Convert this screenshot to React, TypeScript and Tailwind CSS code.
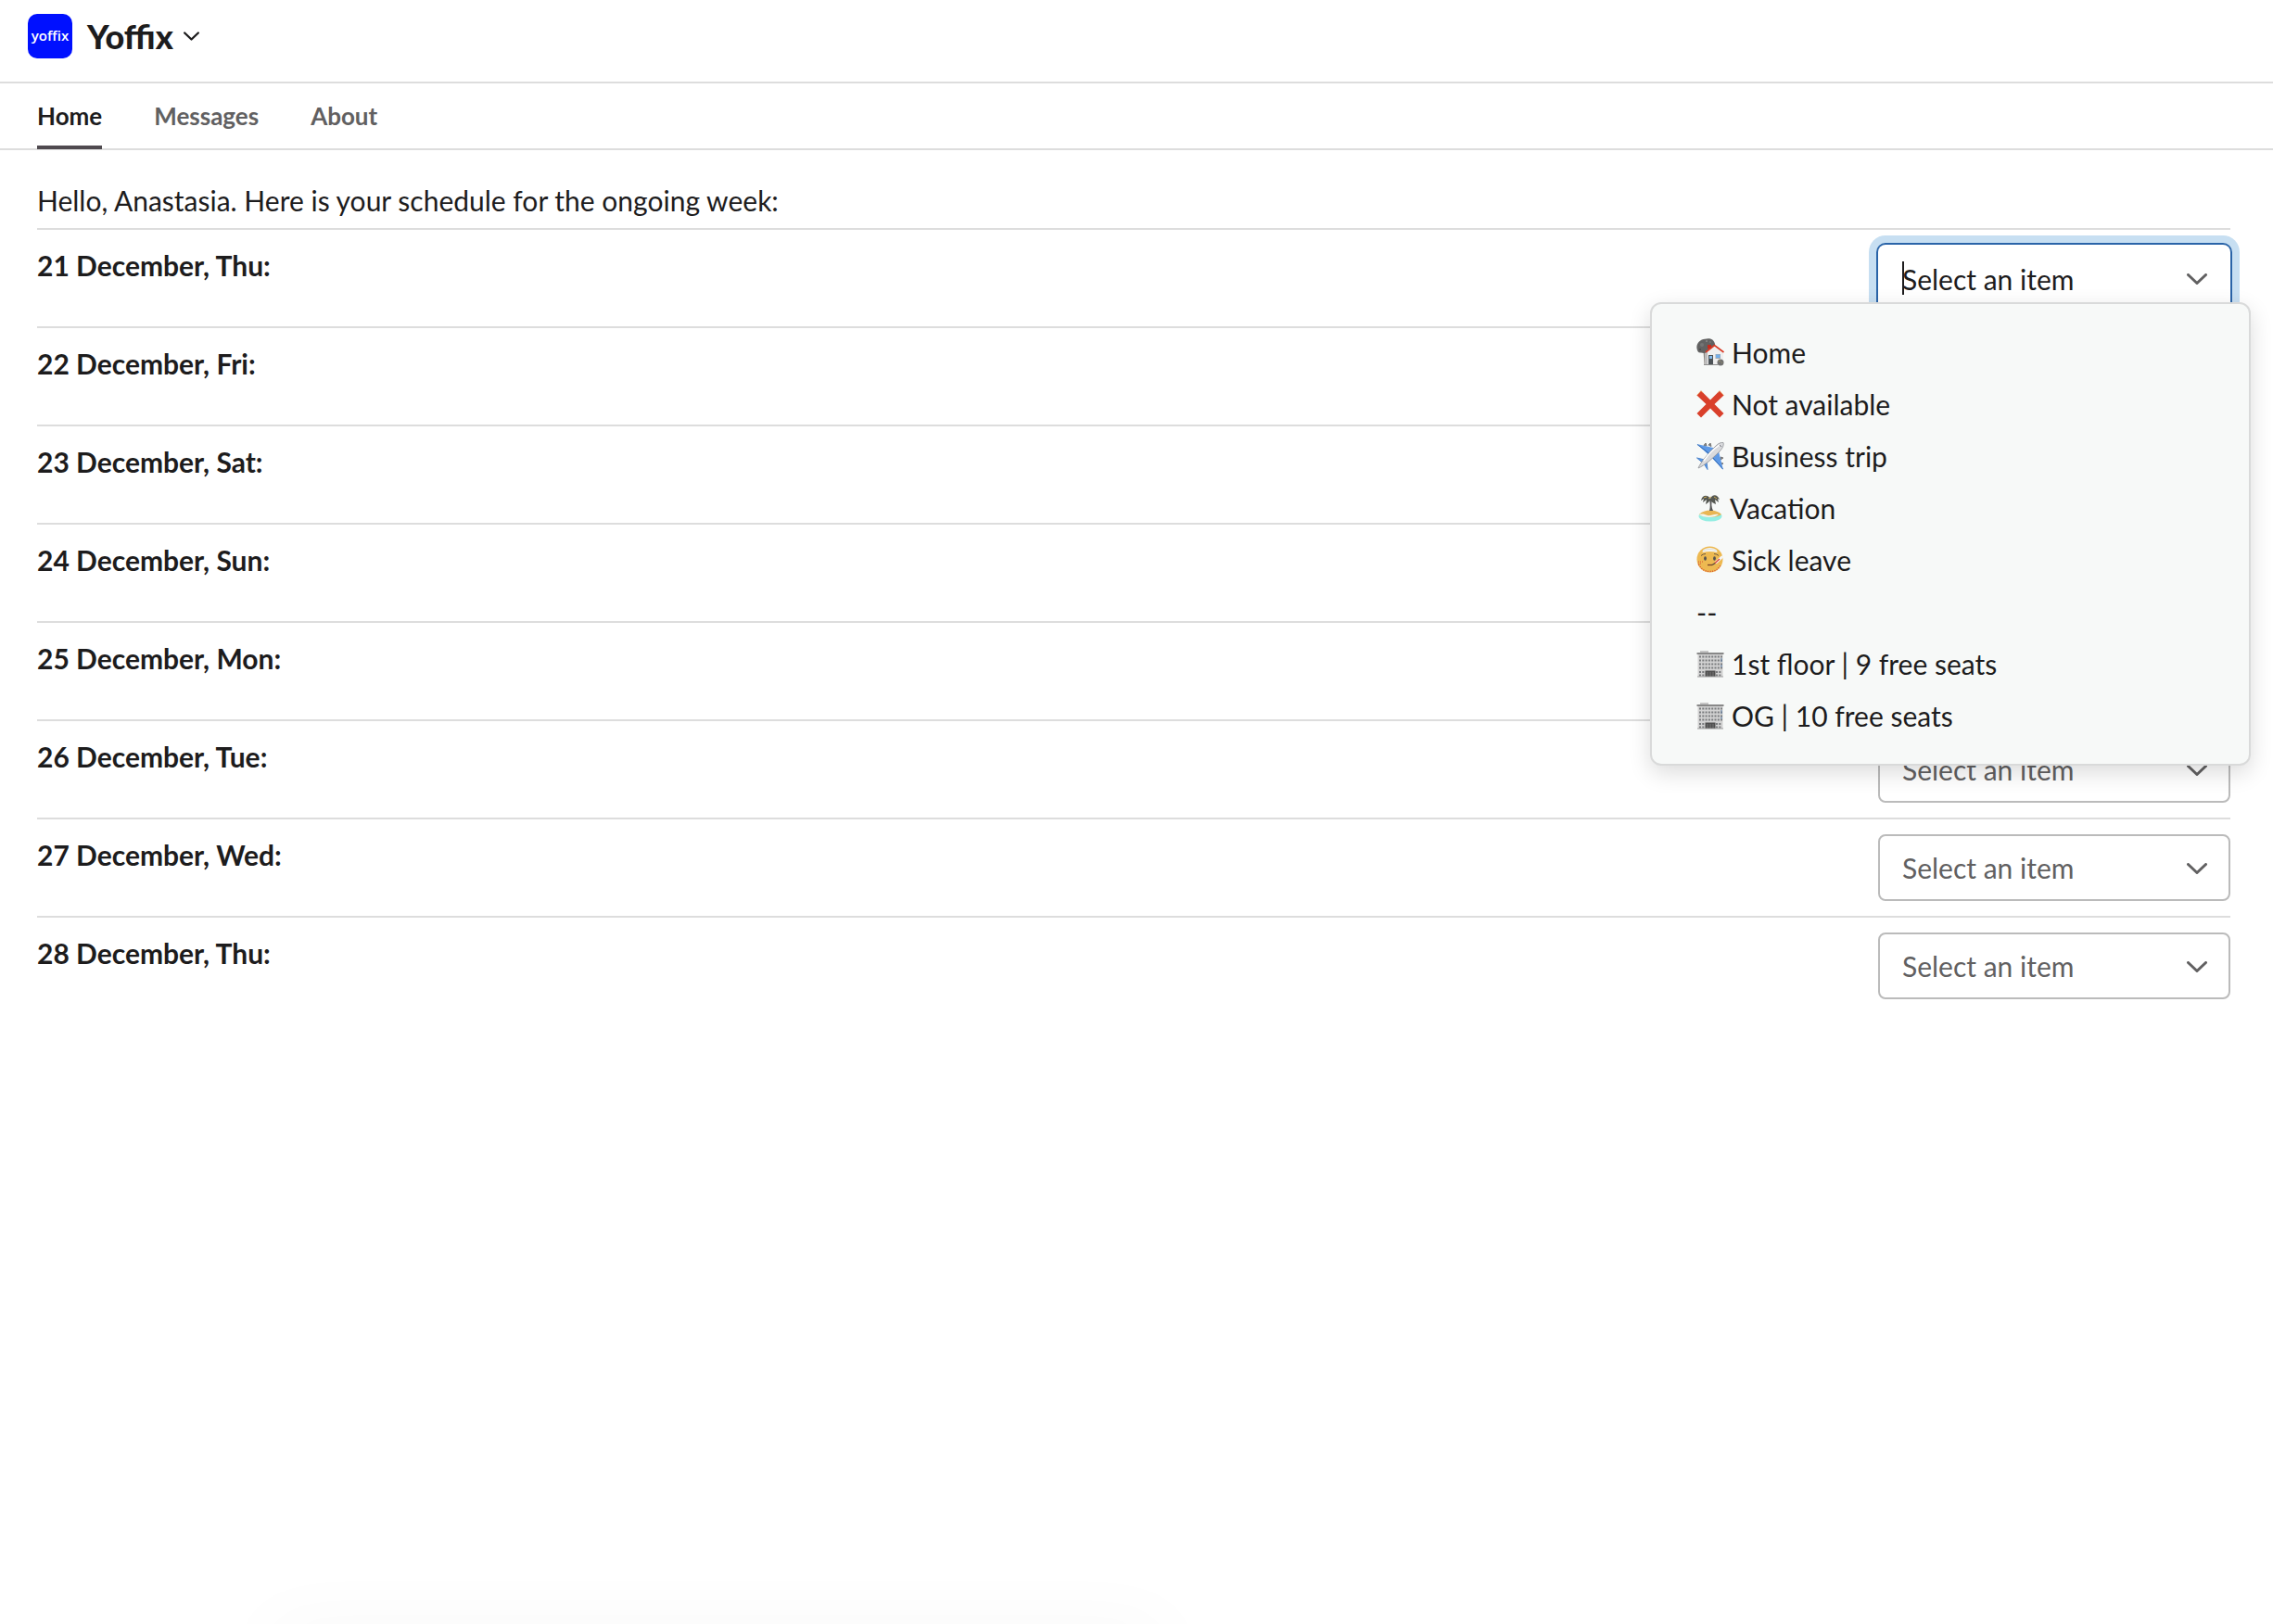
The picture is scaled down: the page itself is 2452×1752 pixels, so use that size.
import { useState } from "react";

const days = [
  "21 December, Thu:",
  "22 December, Fri:",
  "23 December, Sat:",
  "24 December, Sun:",
  "25 December, Mon:",
  "26 December, Tue:",
  "27 December, Wed:",
  "28 December, Thu:"
];

const tabs = ["Home", "Messages", "About"];

function ChevronIcon({ className }: { className: string }) {
  return (
    <svg viewBox="0 0 22 12" fill="none" stroke="currentColor" strokeLinecap="round" strokeLinejoin="round" className={className}>
      <path d="M1.5 1.5 11 10.5 20.5 1.5" strokeWidth="3" />
    </svg>
  );
}

function HouseIcon() {
  return (
    <svg viewBox="0 0 30 30" className="size-[30px] shrink-0">
      <path d="M7.5 13h3l1 15H8.500z" fill="#8b8580" />
      <path d="M.5 11C-.5 6 4 1 9 .8c4-1.500 10-.8 11 5.200 1 4-5 5-8 8-2 3-5 2-7 1.500-3 .5-4-2-4.500-4.500z" fill="#626262" />
      <circle cx="6" cy="7" r="2" fill="#747474" />
      <circle cx="11" cy="3" r="1" fill="#8a8a8a" />
      <circle cx="15" cy="4" r="1" fill="#777" />
      <circle cx="4" cy="12" r="1" fill="#484848" />
      <path d="M12 7h4v4h-4z" fill="#c9291c" />
      <path d="M9.5 16 19.500 8l9.500 7v13H9.500z" fill="#efefef" />
      <path d="M9.5 16v11.500l2.500 1V14z" fill="#bdbdbd" />
      <path d="M10 15 19.500 7.500l10 7.500" fill="none" stroke="#d93a25" strokeWidth="1.6" />
      <path d="M13 18h5v10h-5z" fill="#4d5357" />
      <path d="M14 19h3v3h-3z" fill="#83b9ea" />
      <path d="M20.500 17h5.500v5h-5.500z" fill="#a9a9a9" />
      <path d="M21 17.500h4.500V21H21z" fill="#72aeea" />
      <circle cx="26" cy="26" r="3.500" fill="#707070" />
      <circle cx="25" cy="24.500" r=".8" fill="#a39b6b" />
      <circle cx="27.500" cy="26" r=".6" fill="#a39b6b" />
      <path d="M8 28.500h15" stroke="#8c8c8c" />
    </svg>
  );
}

function CrossIcon() {
  return (
    <svg viewBox="0 0 30 30" className="size-[30px] shrink-0">
      <path d="M.5 5.500 5 .500l10 10 10-10 4.500 5-10 9.500 10 10-4.500 4.500L15 19.500 5 29.500.5 25l10-10z" fill="#d9402b" />
      <path d="M.5 5.500 5 .8l2 2M23 2.800 25 .8l4.500 4.700" fill="none" stroke="#e9a15c" strokeWidth=".7" />
    </svg>
  );
}

function PlaneIcon() {
  return (
    <svg viewBox="0 0 30 30" className="size-[30px] shrink-0">
      <path d="M8 3.500 10 1l1 3zM13 3l2-2 1 3.500zM26 16l3 1-3 2zM26 22l3 1-3 2z" fill="#888" stroke="#777" strokeWidth="1" />
      <path d="M.5 2 20 6.500l-6 8zM24 10l5 20L15 15z" fill="#5f9ae6" />
      <path d="M1 2.500 14 12.500M28.500 29 17 16" stroke="#2f68b5" strokeWidth="1" fill="none" />
      <path d="M.5 17 9 19l-2 3.500zM11 21l1 8.500L8.500 24z" fill="#5f9ae6" stroke="#4b83cc" strokeWidth="1" />
      <path d="M2 28C5 21 12 13 21 4c3-3 6-4 8-3.500C30 3 28 7 25 10 17 18 9 25 2 28z" fill="#d9dadd" stroke="#8d8f94" strokeWidth=".8" />
      <path d="M8 20C13 13 19 7 25 3" stroke="#fff" strokeWidth="1.500" fill="none" />
      <path d="m25 3 2 2" stroke="#74787e" />
    </svg>
  );
}

function IslandIcon() {
  return (
    <svg viewBox="0 0 28 30" className="h-[30px] w-7 shrink-0">
      <ellipse cx="15" cy="24" rx="12.500" ry="5.500" fill="#94eee3" />
      <path d="M3 22c5-6 19-6 24 0-5 4-19 4-24 0z" fill="#e9b653" />
      <path d="M3 22c4-1 6 0 9 1s7-2 12-1c-4 4-17 4-21 0z" fill="#f3f5ef" />
      <path d="M14 6h3c-1 4-1 8 1 12h-4c1-4 1-8 0-12z" fill="#555" />
      <path d="M15 5C12 0 6 1 5 7l3-2-1 4 4-3-1 5c2-1 4-3 5-5 1 2 3 4 6 5l-1-5 4 3-1-4 2 1C23 1 18-1 15 5z" fill="#555852" />
      <path d="m8 4 3-1m8 0 3 2M13 5l3-2" stroke="#c9a955" strokeWidth="1" />
    </svg>
  );
}

function SickIcon() {
  return (
    <svg viewBox="0 0 30 30" className="size-[30px] shrink-0">
      <circle cx="14.500" cy="14.500" r="14" fill="#edb951" />
      <path d="M2.500 20c3 5.500 7 7.500 12 7.500S23 26 26.500 20" fill="none" stroke="#d8452f" strokeWidth="1.300" strokeDasharray="1 1.500" />
      <path d="M7 4.500C10 1 19 1 22 4.500l.5 2.500c-5-1.500-11-1.500-16 0z" fill="#f4f4f0" />
      <path d="M7 5c5-2 10-2 15 0" fill="none" stroke="#d6d6cf" strokeWidth=".7" />
      <path d="M5 10.500q2-2 5-2M19 8.500q3 0 5 2" stroke="#6b5a43" fill="none" />
      <ellipse cx="9.500" cy="13.500" rx="1.400" ry="2.300" fill="#53514f" />
      <ellipse cx="19.500" cy="13.500" rx="1.400" ry="2.300" fill="#53514f" />
      <path d="M2 17h5M2 19h4" stroke="#da5335" strokeDasharray="1 1" />
      <path d="M12 20.500h5" stroke="#774129" strokeWidth="1.300" fill="none" />
      <path d="m17 20.500 4-2.500" stroke="#55463c" strokeWidth="1.300" />
      <path d="m21.500 17.500 6-5.500" stroke="#f5f6f6" strokeWidth="3" strokeLinecap="round" />
      <path d="m20 18.500 5-4.500" stroke="#d94234" strokeWidth="1.400" />
    </svg>
  );
}

function OfficeIcon() {
  return (
    <svg viewBox="0 0 30 30" className="size-[30px] shrink-0">
      <path d="M4 1h9v3H4z" fill="#c5c5c5" />
      <path d="M.5 3h29v2H.5z" fill="#888" />
      <path d="M1.500 5h27v24h-27z" fill="#d2d2d2" />
      <path
        d="M3 7.500h25M3 11.500h25M3 15.500h25M3 19.500h25M3 24h6M21 24h6M3 27.500h6M21 27.500h6"
        stroke="#7a7c7e"
        strokeWidth="2"
        strokeDasharray="2 1.300"
      />
      <path d="M27 9v4m0 3v3" stroke="#6585ab" strokeWidth="1" />
      <path d="M9.500 22.500h11V29h-11z" fill="#4f4f4f" />
      <path d="M12 24v5m3-5v5m3-5v5" stroke="#858585" strokeWidth=".8" />
      <path d="M1 29h28" stroke="#9d9d9d" />
    </svg>
  );
}

const options = [
  { label: "Home", icon: <HouseIcon /> },
  { label: "Not available", icon: <CrossIcon /> },
  { label: "Business trip", icon: <PlaneIcon /> },
  { label: "Vacation", icon: <IslandIcon /> },
  { label: "Sick leave", icon: <SickIcon /> },
  { label: "--", icon: null },
  { label: "1st floor | 9 free seats", icon: <OfficeIcon /> },
  { label: "OG | 10 free seats", icon: <OfficeIcon /> }
];

function DaySelect({ id }: { id: string }) {
  return (
    <div className="relative w-[380px]">
      <select
        id={id}
        className="block h-[72px] w-full appearance-none rounded-lg border-2 border-[#bbbbbb] bg-white pl-6 pr-16 pt-px text-[30px] text-[#616061]"
      >
        <option>Select an item</option>
      </select>
      <ChevronIcon className="pointer-events-none absolute right-[25px] top-[31px] h-3 w-[22px] text-[#616061]" />
    </div>
  );
}

function OpenDaySelect({ id }: { id: string }) {
  const [value, setValue] = useState("");

  return (
    <div className="relative w-[380px]">
      <input
        id={id}
        type="text"
        role="combobox"
        aria-expanded="true"
        aria-controls="day-options"
        placeholder="Select an item"
        value={value}
        onChange={(e) => setValue(e.target.value)}
        className="block h-[72px] w-full rounded-lg border-2 border-transparent bg-white pl-6 pr-16 pt-px text-[30px] text-[#1d1c1d] shadow-[0_0_0_2px_#2a64a8,0_0_0_10px_#c7dff2] outline-none placeholder:text-[#1d1c1d] placeholder:opacity-100"
      />
      <span className="absolute left-[26px] top-[18px] h-9 w-0.5 bg-[#1d1c1d]" />
      <ChevronIcon className="pointer-events-none absolute right-[25px] top-[31px] h-3 w-[22px] text-[#616061]" />

      <ul
        id="day-options"
        role="listbox"
        className="absolute -right-[22px] top-[62px] z-10 w-[648px] rounded-xl border-2 border-[#d9dada] bg-[#f7f9f8] py-6 shadow-[0_8px_24px_rgba(0,0,0,0.14)]"
      >
        {options.map((option) => (
          <li key={option.label} role="option" aria-selected="false">
            <button
              type="button"
              onClick={() => setValue(option.label)}
              className="flex h-14 w-full items-center gap-2 pl-12 text-left text-[30px]"
            >
              {option.icon}
              <span>{option.label}</span>
            </button>
          </li>
        ))}
      </ul>
    </div>
  );
}

export default function App() {
  return (
    <div className="relative min-h-screen overflow-hidden bg-white font-['Lato',sans-serif] text-[#1d1c1d]">
      <header className="flex h-[90px] items-start border-b-2 border-[#dddddd] pl-[30px] pt-[15px]">
        <div className="flex size-12 items-center justify-center rounded-[10px] bg-[#0010ff] pb-0.5 font-['Open_Sans',sans-serif] text-[15px] font-semibold leading-none text-white [font-variant-ligatures:none]">
          yoffix
        </div>
        <button type="button" className="ml-4 flex h-12 items-center gap-[11px] text-4xl font-black">
          Yoffix
          <ChevronIcon className="h-[10px] w-[17px]" />
        </button>
      </header>

      <nav className="flex h-[72px] gap-14 border-b-2 border-[#dddddd] px-10">
        {tabs.map((tab) => (
          <a
            key={tab}
            href="#"
            className={
              tab === "Home"
                ? "h-[71px] border-b-4 border-[#4f4a4f] pt-[15px] text-[26px] font-bold leading-10"
                : "h-[71px] pt-[15px] text-[26px] font-bold leading-10 text-[#616061]"
            }
          >
            {tab}
          </a>
        ))}
      </nav>

      <main className="pl-10 pr-[46px] pt-8">
        <p className="h-[52px] text-[30px] leading-[44px]">
          Hello, Anastasia. Here is your schedule for the ongoing week:
        </p>
        {days.map((day, index) => (
          <div key={day} className="flex items-start justify-between border-t-2 border-[#dddddd] py-4">
            <label htmlFor={`day-${index}`} className="text-[30px] font-bold leading-[44px]">
              {day}
            </label>
            {index === 0 ? <OpenDaySelect id={`day-${index}`} /> : <DaySelect id={`day-${index}`} />}
          </div>
        ))}
      </main>

      <div className="absolute -bottom-10 left-72 h-8 w-[970px] rounded-xl shadow-[0_0_80px_rgba(0,0,0,0.05)]" />
    </div>
  );
}
